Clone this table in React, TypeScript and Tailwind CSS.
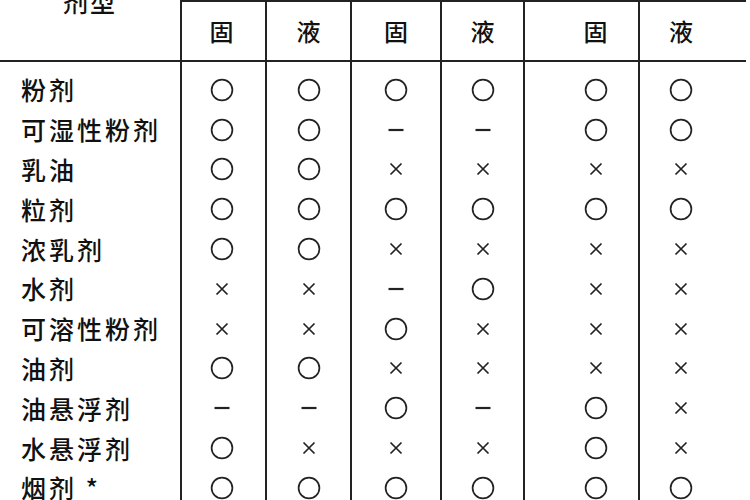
import React from "react";

type Mark = "o" | "x" | "-";

// 剂型 × 固/液 对照表
const rows: { name: string; marks: Mark[] }[] = [
  { name: "粉剂", marks: ["o", "o", "o", "o", "o", "o"] },
  { name: "可湿性粉剂", marks: ["o", "o", "-", "-", "o", "o"] },
  { name: "乳油", marks: ["o", "o", "x", "x", "x", "x"] },
  { name: "粒剂", marks: ["o", "o", "o", "o", "o", "o"] },
  { name: "浓乳剂", marks: ["o", "o", "x", "x", "x", "x"] },
  { name: "水剂", marks: ["x", "x", "-", "o", "x", "x"] },
  { name: "可溶性粉剂", marks: ["x", "x", "o", "x", "x", "x"] },
  { name: "油剂", marks: ["o", "o", "x", "x", "x", "x"] },
  { name: "油悬浮剂", marks: ["-", "-", "o", "-", "o", "x"] },
  { name: "水悬浮剂", marks: ["o", "x", "x", "x", "o", "x"] },
  { name: "烟剂 *", marks: ["o", "o", "o", "o", "o", "o"] },
];

const heads = ["固", "液", "固", "液", "固", "液"];

// column cell classes (border + offset of content)
const cellCls = [
  "border-l-2 border-[#222] pr-[4px]",
  "border-l-2 border-[#222]",
  "border-l-2 border-[#222]",
  "border-l-2 border-[#222]",
  "border-l-2 border-[#222] pl-[28px]",
  "border-l-2 border-[#222] pr-[24px]",
];

const gridCols = "grid grid-cols-[180px_85px_85px_90px_83px_115px_108px]";

function Symbol({ mark }: { mark: Mark }) {
  if (mark === "o") {
    return (
      <svg width="24" height="24" viewBox="0 0 24 24">
        <circle cx="12" cy="12" r="10.4" fill="none" stroke="#222" strokeWidth="1.7" />
      </svg>
    );
  }
  if (mark === "x") {
    return (
      <svg width="14" height="14" viewBox="0 0 14 14">
        <path d="M1.5 1.5 L12.5 12.5 M12.5 1.5 L1.5 12.5" stroke="#222" strokeWidth="1.7" />
      </svg>
    );
  }
  return (
    <svg width="16" height="4" viewBox="0 0 16 4">
      <path d="M0.5 2 H15.5" stroke="#222" strokeWidth="2.2" />
    </svg>
  );
}

export default function App() {
  return (
    <div
      className="w-[750px] h-[500px] overflow-hidden bg-white text-[#111] font-medium"
      style={{ fontFamily: '"Noto Sans CJK SC", "Noto Sans", sans-serif' }}
    >
      <div className="w-[746px]">
        {/* Header */}
        <div className={`${gridCols} h-[62px] border-b-2 border-[#222]`}>
          <div className="flex justify-center">
            <span className="text-[25px] tracking-[2px] leading-none -mt-[11px]">剂型</span>
          </div>
          {heads.map((h, i) => (
            <div
              key={i}
              className={`${cellCls[i]} border-t-2 flex items-center justify-center text-[24px] leading-none`}
            >
              {h}
            </div>
          ))}
        </div>

        {/* Body */}
        <div className="flex flex-col">
          <div className={`${gridCols} h-[8px]`}>
            <div />
            {cellCls.map((c, i) => (
              <div key={i} className={c} />
            ))}
          </div>
          {rows.map((r) => (
            <div key={r.name} className={`${gridCols} h-[39.8px]`}>
              <div className="flex items-center pl-[21px] text-[25px] tracking-[3px] leading-none whitespace-nowrap">
                {r.name}
              </div>
              {r.marks.map((m, i) => (
                <div key={i} className={`${cellCls[i]} flex items-center justify-center`}>
                  <Symbol mark={m} />
                </div>
              ))}
            </div>
          ))}
        </div>
      </div>
    </div>
  );
}
